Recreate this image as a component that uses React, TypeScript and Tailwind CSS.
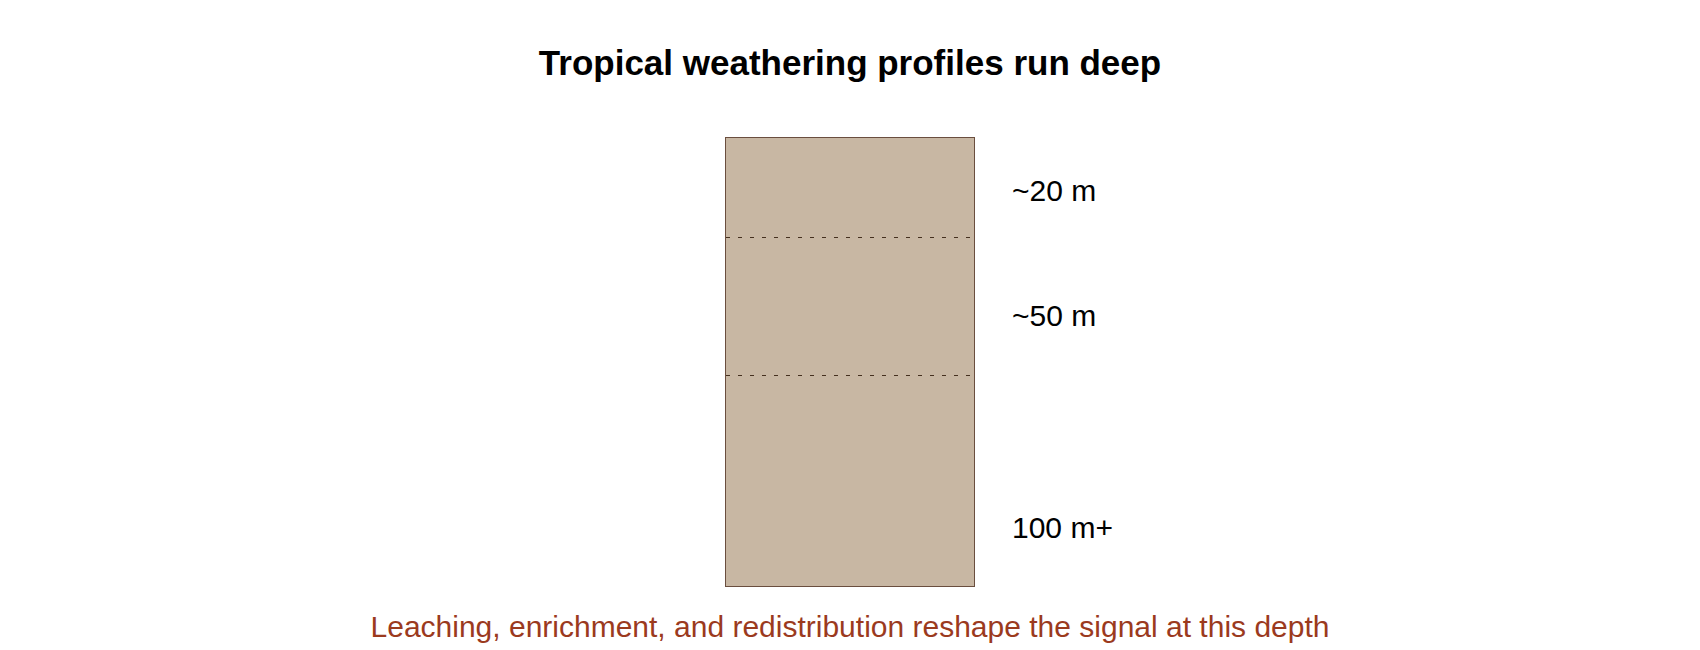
import React from 'react';

function DashLine() {
  return (
    <svg className="block h-[1px] w-full" preserveAspectRatio="none">
      <line x1="0" y1="0.5" x2="100%" y2="0.5" stroke="#45301f" strokeWidth="1" strokeDasharray="4 8" />
    </svg>
  );
}

export default function App() {
  const labels = [
    { text: '~20 m', mt: 'mt-[39px]' },
    { text: '~50 m', mt: 'mt-[95px]' },
    { text: '100 m+', mt: 'mt-[182px]' },
  ];

  return (
    <div className="flex h-[650px] w-full flex-col items-center bg-white pt-[45px] font-['Liberation_Sans',Arial,sans-serif]">
      {/* Title */}
      <h1 className="text-[35px] font-bold leading-none text-black">Tropical weathering profiles run deep</h1>

      {/* Profile column with depth labels */}
      <div className="mt-[57px] grid w-full grid-cols-[1fr_250px_1fr]">
        <div />
        <div className="flex h-[450px] w-[250px] flex-col border border-[#6a4e3e] bg-[#c8b7a3]">
          <div className="h-[99px]" />
          <DashLine />
          <div className="h-[137px]" />
          <DashLine />
          <div className="flex-1" />
        </div>
        <div className="flex flex-col pl-[37px]">
          {labels.map((label) => (
            <div key={label.text} className={`${label.mt} text-[30px] leading-none text-black`}>
              {label.text}
            </div>
          ))}
        </div>
      </div>

      {/* Caption */}
      <p className="mt-[25px] text-[30px] leading-none text-[#9b3a1e]">
        Leaching, enrichment, and redistribution reshape the signal at this depth
      </p>
    </div>
  );
}
